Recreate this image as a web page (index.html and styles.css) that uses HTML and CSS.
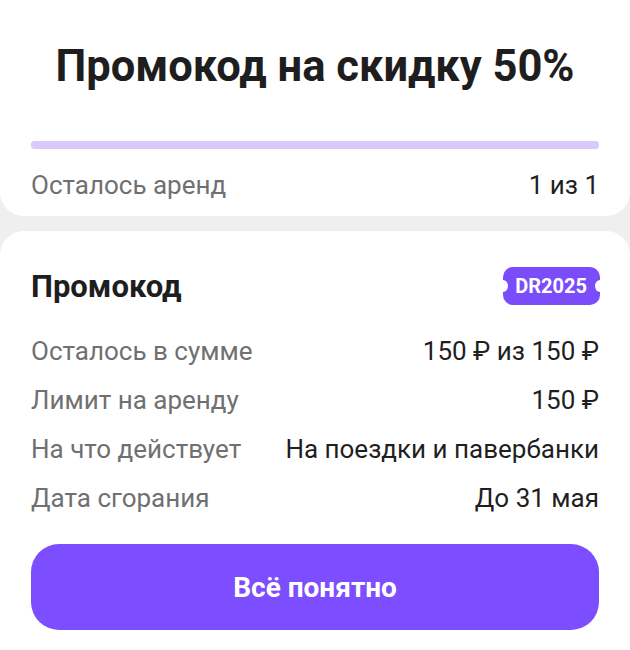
FILE: index.html
```html
<!DOCTYPE html>
<html lang="ru">
<head>
    <meta charset="UTF-8">
    <meta name="viewport" content="width=device-width, initial-scale=1.0">
    <title>Промокод</title>
    <link rel="stylesheet" href="styles.css">
</head>
<body>
    <div class="card top-card">
        <h1 class="title">Промокод на скидку 50%</h1>
        <div class="progress"><div class="progress-fill"></div></div>
        <div class="row">
            <span class="label">Осталось аренд</span>
            <span class="value">1 из 1</span>
        </div>
    </div>

    <div class="card bottom-card">
        <div class="promo-head">
            <span class="promo-title">Промокод</span>
            <span class="ticket">DR2025</span>
        </div>
        <div class="rows">
            <div class="row">
                <span class="label">Осталось в сумме</span>
                <span class="value">150 ₽ из 150 ₽</span>
            </div>
            <div class="row">
                <span class="label">Лимит на аренду</span>
                <span class="value">150 ₽</span>
            </div>
            <div class="row">
                <span class="label">На что действует</span>
                <span class="value">На поездки и павербанки</span>
            </div>
            <div class="row">
                <span class="label">Дата сгорания</span>
                <span class="value">До 31 мая</span>
            </div>
        </div>
        <button class="ok-btn">Всё понятно</button>
    </div>
</body>
</html>
```

FILE: styles.css
```css
body {
    margin: 0;
    padding: 0;
    background-color: #efefef;
    font-family: Roboto, "Noto Sans", sans-serif;
    color: #1f1f1f;
    height: 650px;
    overflow: hidden;
}

.card {
    background-color: #fff;
    padding: 0 31px;
}

.top-card {
    border-radius: 0 0 24px 24px;
    padding-top: 43px;
    padding-bottom: 7px;
}

.title {
    margin: 0;
    text-align: center;
    font-size: 43.5px;
    font-weight: 700;
    line-height: 48px;
    color: #1e1e1e;
}

.progress {
    margin-top: 50px;
    height: 8px;
    border-radius: 4px;
    background-color: #d9c9fb;
}

.progress-fill {
    width: 100%;
    height: 100%;
    border-radius: 4px;
    background-color: #d9c9fb;
}

.row {
    display: flex;
    justify-content: space-between;
    align-items: center;
    height: 49px;
    font-size: 26px;
}

.top-card .row {
    margin-top: 11px;
}

.label {
    color: #707070;
}

.value {
    color: #1f1f1f;
}

.bottom-card {
    margin-top: 15px;
    border-radius: 24px 24px 0 0;
    padding-top: 35px;
    padding-bottom: 30px;
}

.promo-head {
    display: flex;
    justify-content: space-between;
    align-items: center;
    height: 40px;
}

.promo-title {
    font-size: 31px;
    font-weight: 700;
    color: #1e1e1e;
}

.ticket {
    position: relative;
    background-color: #7b4dfa;
    color: #fff;
    font-size: 20px;
    font-weight: 700;
    line-height: 24px;
    padding: 7px 13px 7px 12px;
    border-radius: 10px;
    margin-right: -1px;
}

.ticket::before,
.ticket::after {
    content: "";
    position: absolute;
    top: 50%;
    width: 10px;
    height: 12px;
    margin-top: -6px;
    border-radius: 50%;
    background-color: #fff;
}

.ticket::before {
    left: -5px;
}

.ticket::after {
    right: -5px;
}

.rows {
    margin-top: 20px;
}

.ok-btn {
    display: block;
    width: 100%;
    height: 86px;
    margin-top: 22px;
    border: none;
    border-radius: 28px;
    background-color: #7c4eff;
    color: #fff;
    font-family: Roboto, "Noto Sans", sans-serif;
    font-size: 28px;
    font-weight: 700;
    cursor: pointer;
}
```
